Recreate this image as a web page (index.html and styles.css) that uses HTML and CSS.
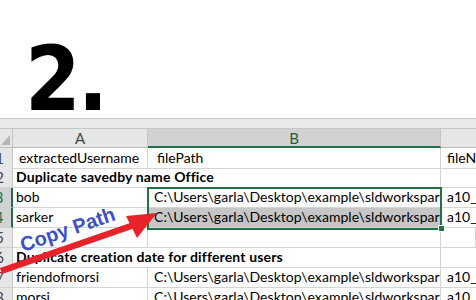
FILE: index.html
```html
<!DOCTYPE html>
<html>
<head>
<meta charset="utf-8">
<link rel="stylesheet" href="styles.css">
</head>
<body>
<div class="page">
  <div class="title">2.</div>
  <div class="strip"></div>
  <div class="sheet">
    <div class="c corner"><span class="tri"></span></div>
    <div class="c ch">A</div>
    <div class="c ch ch-sel">B</div>
    <div class="c ch ch-last"></div>

    <div class="c rh r1">1</div>
    <div class="c r1 pa-a1">extractedUsername</div>
    <div class="c r1 pb-b1">filePath</div>
    <div class="c r1 pc">fileName</div>

    <div class="c rh">2</div>
    <div class="c span2 bold">Duplicate savedby name Office</div>
    <div class="c pc"></div>

    <div class="c rh rh-sel">3</div>
    <div class="c">bob</div>
    <div class="c pb">C:\Users\garla\Desktop\example\sldworksparts\a10.SLDPRT</div>
    <div class="c pc">a10_part.SLDPRT</div>

    <div class="c rh rh-sel">4</div>
    <div class="c">sarker</div>
    <div class="c pb sel-fill">C:\Users\garla\Desktop\example\sldworksparts\a10.SLDPRT</div>
    <div class="c pc">a10_part.SLDPRT</div>

    <div class="c rh">5</div>
    <div class="c"></div>
    <div class="c"></div>
    <div class="c"></div>

    <div class="c rh">6</div>
    <div class="c span2 bold">Duplicate creation date for different users</div>
    <div class="c pc"></div>

    <div class="c rh">7</div>
    <div class="c">friendofmorsi</div>
    <div class="c pb">C:\Users\garla\Desktop\example\sldworksparts\a10.SLDPRT</div>
    <div class="c pc">a10_part.SLDPRT</div>

    <div class="c rh">8</div>
    <div class="c">morsi</div>
    <div class="c pb">C:\Users\garla\Desktop\example\sldworksparts\a10.SLDPRT</div>
    <div class="c pc">a10_part.SLDPRT</div>

    <div class="selection"></div>
    <div class="handle"></div>
  </div>

  <svg class="annot" width="476" height="300" viewBox="0 0 476 300">
    <line x1="1" y1="271" x2="134" y2="225" stroke="#e8222b" stroke-width="6.5" stroke-linecap="butt"/>
    <polygon points="157,213 126,216 137,238" fill="#e8222b"/>
    <text class="copy" x="23" y="252" transform="rotate(-19 23 252)">Copy Path</text>
  </svg>
</div>
</body>
</html>
```

FILE: styles.css
```css
html, body {
  margin: 0;
  padding: 0;
  background: #ffffff;
  overflow: hidden;
}

.page {
  position: relative;
  width: 476px;
  height: 300px;
  overflow: hidden;
}

.title {
  height: 118px;
  box-sizing: border-box;
  padding-top: 35px;
  padding-left: 25px;
  font-family: "DejaVu Sans Condensed", "DejaVu Sans", sans-serif;
  font-weight: bold;
  font-size: 89px;
  line-height: 89px;
  letter-spacing: -3px;
  color: #000000;
}

.strip {
  height: 10px;
  box-sizing: border-box;
  border-top: 1px solid #c8c8c8;
  background: #e9e9e9;
}

.sheet {
  position: relative;
  margin-left: -13px;
  display: grid;
  grid-template-columns: 26px 135px 293px 1fr;
  grid-auto-rows: 20px;
  font-family: "Lato", "Liberation Sans", sans-serif;
  font-size: 14px;
  color: #000000;
}

.c {
  box-sizing: border-box;
  border-right: 1px solid #d4d4d4;
  border-bottom: 1px solid #d4d4d4;
  padding: 0 3px 1px 3px;
  line-height: 18px;
  white-space: nowrap;
  overflow: hidden;
  display: flex;
  align-items: flex-end;
}

.r1 {
  height: 21px;
}

.sheet > .r1 {
  align-self: start;
}

.ch, .corner {
  background: #e6e6e6;
  border-top: 1px solid #c6c6c6;
  border-right: 1px solid #c6c6c6;
  border-bottom: 1px solid #bdbdbd;
  justify-content: center;
  align-items: center;
  color: #444444;
  font-size: 15px;
  padding: 0;
}

.corner {
  position: relative;
}

.tri {
  position: absolute;
  right: 2px;
  bottom: 2px;
  width: 0;
  height: 0;
  border-left: 9px solid transparent;
  border-bottom: 10px solid #b6b6b6;
}

.ch-sel {
  background: #d2d2d2;
  border-bottom: 2px solid #217346;
  color: #1f5f3b;
}

.ch-last {
  border-right: none;
}

.rh {
  background: #e6e6e6;
  border-right: 1px solid #c6c6c6;
  border-bottom: 1px solid #d0d0d0;
  justify-content: center;
  color: #444444;
  padding: 0 0 1px 0;
  font-size: 15px;
}

.rh-sel {
  background: #d2d2d2;
  color: #217346;
  border-right: 2px solid #217346;
}

.span2 {
  grid-column: span 2;
}

.bold {
  font-weight: bold;
  letter-spacing: 0.15px;
}

.pa-a1 {
  padding-left: 6px;
}

.pb-b1 {
  padding-left: 9px;
}

.pb {
  padding-left: 6px;
  padding-right: 0;
  letter-spacing: 0.05px;
}

.pc {
  padding-left: 6px;
  border-right: none;
}

.sel-fill {
  background: #c6c6c6;
}

.selection {
  position: absolute;
  left: 160px;
  top: 59px;
  width: 295px;
  height: 43px;
  box-sizing: border-box;
  border: 2px solid #217346;
  pointer-events: none;
}

.handle {
  position: absolute;
  left: 451px;
  top: 97px;
  width: 7px;
  height: 7px;
  box-sizing: border-box;
  background: #217346;
  border: 1px solid #ffffff;
}

.annot {
  position: absolute;
  left: 0;
  top: 0;
  pointer-events: none;
}

.copy {
  font-family: "Liberation Sans", "Arial", sans-serif;
  font-weight: bold;
  font-size: 20px;
  fill: #3d4fc6;
}
```
